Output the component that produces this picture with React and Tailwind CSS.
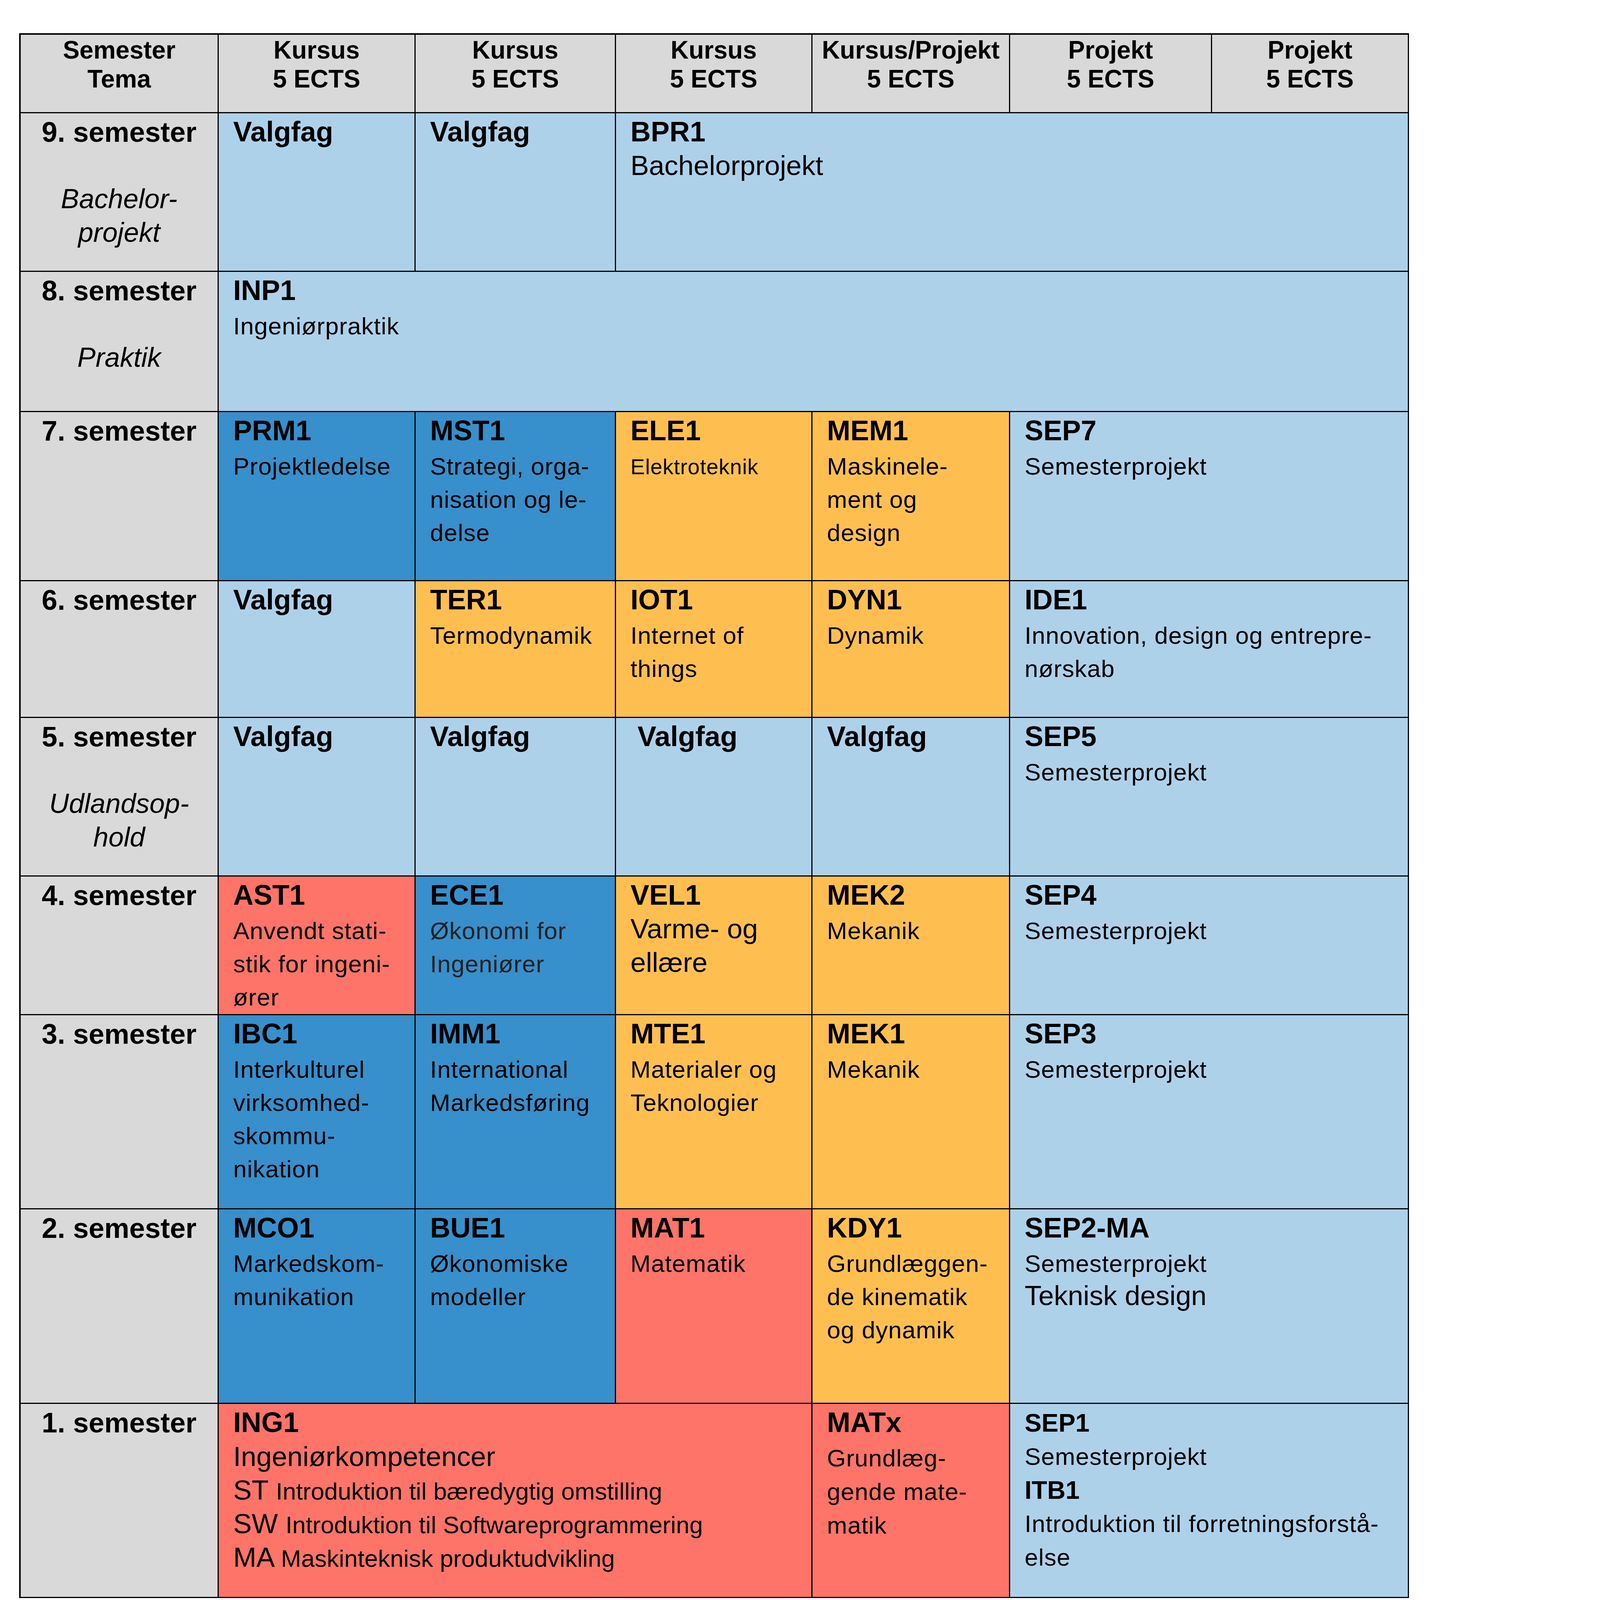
import React from "react";

const LB = "bg-[#AED1EA]";
const DB = "bg-[#378FCB]";
const OR = "bg-[#FFBF50]";
const RD = "bg-[#FF7469]";
const GR = "bg-[#D9D9D9]";

function Cell({ bg, span = "", pad = "pl-[37px] pt-[6px]", className = "", children }) {
  return (
    <div
      className={[
        "border-r-[3px] border-b-[3px] border-black whitespace-nowrap text-black overflow-hidden",
        bg,
        span,
        pad,
        className,
      ].join(" ")}
    >
      {children}
    </div>
  );
}

const Code = ({ children, className = "" }) => (
  <div className={"font-bold text-[72px] leading-[83px] " + className}>{children}</div>
);
const Desc = ({ children, className = "" }) => (
  <div className={"text-[62px] leading-[85px] tracking-[1px] mt-[7px] " + className}>{children}</div>
);
const Big = ({ children, className = "" }) => (
  <div className={"text-[71px] leading-[86px] mt-[2px] " + className}>{children}</div>
);

function Head({ a, b }) {
  return (
    <Cell bg={GR} pad="pt-[2px] text-center">
      <div className="font-bold text-[64px] leading-[74px]">
        {a}
        <br />
        {b}
      </div>
    </Cell>
  );
}

function Sem({ label, theme }) {
  return (
    <Cell bg={GR} pad="pt-[6px] text-center">
      <div className="font-bold text-[72px] leading-[85px]">{label}</div>
      {theme && <div className="italic text-[70px] leading-[86px] mt-[85px]">{theme}</div>}
    </Cell>
  );
}

export default function App() {
  return (
    <div className="min-h-screen bg-white pt-[85px] pl-[49px] font-['Liberation_Sans',Arial,sans-serif]">
      <div className="grid w-max grid-cols-[507px_504px_513px_503px_506px_517px_504px] grid-rows-[201px_406px_359px_433px_350px_406px_355px_497px_498px_497px] border-t-[4px] border-l-[4px] border-black">
        {/* Header */}
        <Head a="Semester" b="Tema" />
        <Head a="Kursus" b="5 ECTS" />
        <Head a="Kursus" b="5 ECTS" />
        <Head a="Kursus" b="5 ECTS" />
        <Head a="Kursus/Projekt" b="5 ECTS" />
        <Head a="Projekt" b="5 ECTS" />
        <Head a="Projekt" b="5 ECTS" />

        {/* 9. semester */}
        <Sem label="9. semester" theme={<>Bachelor-<br />projekt</>} />
        <Cell bg={LB}><Code>Valgfag</Code></Cell>
        <Cell bg={LB}><Code>Valgfag</Code></Cell>
        <Cell bg={LB} span="col-span-4">
          <Code>BPR1</Code>
          <Big>Bachelorprojekt</Big>
        </Cell>

        {/* 8. semester */}
        <Sem label="8. semester" theme="Praktik" />
        <Cell bg={LB} span="col-span-6">
          <Code>INP1</Code>
          <Desc>Ingeniørpraktik</Desc>
        </Cell>

        {/* 7. semester */}
        <Sem label="7. semester" />
        <Cell bg={DB}>
          <Code>PRM1</Code>
          <Desc>Projektledelse</Desc>
        </Cell>
        <Cell bg={DB}>
          <Code>MST1</Code>
          <Desc>Strategi, orga-<br />nisation og le-<br />delse</Desc>
        </Cell>
        <Cell bg={OR}>
          <Code>ELE1</Code>
          <div className="text-[55px] leading-[85px] tracking-[1px] mt-[9px]">Elektroteknik</div>
        </Cell>
        <Cell bg={OR}>
          <Code>MEM1</Code>
          <Desc>Maskinele-<br />ment og<br />design</Desc>
        </Cell>
        <Cell bg={LB} span="col-span-2">
          <Code>SEP7</Code>
          <Desc>Semesterprojekt</Desc>
        </Cell>

        {/* 6. semester */}
        <Sem label="6. semester" />
        <Cell bg={LB}><Code>Valgfag</Code></Cell>
        <Cell bg={OR}>
          <Code>TER1</Code>
          <Desc>Termodynamik</Desc>
        </Cell>
        <Cell bg={OR}>
          <Code>IOT1</Code>
          <Desc>Internet of<br />things</Desc>
        </Cell>
        <Cell bg={OR}>
          <Code>DYN1</Code>
          <Desc>Dynamik</Desc>
        </Cell>
        <Cell bg={LB} span="col-span-2">
          <Code>IDE1</Code>
          <Desc>Innovation, design og entrepre-<br />nørskab</Desc>
        </Cell>

        {/* 5. semester */}
        <Sem label="5. semester" theme={<>Udlandsop-<br />hold</>} />
        <Cell bg={LB}><Code>Valgfag</Code></Cell>
        <Cell bg={LB}><Code>Valgfag</Code></Cell>
        <Cell bg={LB} pad="pl-[55px] pt-[6px]"><Code>Valgfag</Code></Cell>
        <Cell bg={LB}><Code>Valgfag</Code></Cell>
        <Cell bg={LB} span="col-span-2">
          <Code>SEP5</Code>
          <Desc>Semesterprojekt</Desc>
        </Cell>

        {/* 4. semester */}
        <Sem label="4. semester" />
        <Cell bg={RD}>
          <Code>AST1</Code>
          <Desc>Anvendt stati-<br />stik for ingeni-<br />ører</Desc>
        </Cell>
        <Cell bg={DB}>
          <Code>ECE1</Code>
          <Desc className="text-[#222222]">Økonomi for<br />Ingeniører</Desc>
        </Cell>
        <Cell bg={OR}>
          <Code>VEL1</Code>
          <Big>Varme- og<br />ellære</Big>
        </Cell>
        <Cell bg={OR}>
          <Code>MEK2</Code>
          <Desc>Mekanik</Desc>
        </Cell>
        <Cell bg={LB} span="col-span-2">
          <Code>SEP4</Code>
          <Desc>Semesterprojekt</Desc>
        </Cell>

        {/* 3. semester */}
        <Sem label="3. semester" />
        <Cell bg={DB}>
          <Code>IBC1</Code>
          <Desc>Interkulturel<br />virksomhed-<br />skommu-<br />nikation</Desc>
        </Cell>
        <Cell bg={DB}>
          <Code>IMM1</Code>
          <Desc>International<br />Markedsføring</Desc>
        </Cell>
        <Cell bg={OR}>
          <Code>MTE1</Code>
          <Desc>Materialer og<br />Teknologier</Desc>
        </Cell>
        <Cell bg={OR}>
          <Code>MEK1</Code>
          <Desc>Mekanik</Desc>
        </Cell>
        <Cell bg={LB} span="col-span-2">
          <Code>SEP3</Code>
          <Desc>Semesterprojekt</Desc>
        </Cell>

        {/* 2. semester */}
        <Sem label="2. semester" />
        <Cell bg={DB}>
          <Code>MCO1</Code>
          <Desc>Markedskom-<br />munikation</Desc>
        </Cell>
        <Cell bg={DB}>
          <Code>BUE1</Code>
          <Desc>Økonomiske<br />modeller</Desc>
        </Cell>
        <Cell bg={RD}>
          <Code>MAT1</Code>
          <Desc>Matematik</Desc>
        </Cell>
        <Cell bg={OR}>
          <Code>KDY1</Code>
          <Desc>Grundlæggen-<br />de kinematik<br />og dynamik</Desc>
        </Cell>
        <Cell bg={LB} span="col-span-2">
          <Code>SEP2-MA</Code>
          <Desc className="mt-[3px]">Semesterprojekt</Desc>
          <div className="text-[71px] leading-[84px] -mt-[2px]">Teknisk design</div>
        </Cell>

        {/* 1. semester */}
        <Sem label="1. semester" />
        <Cell bg={RD} span="col-span-3">
          <Code>ING1</Code>
          <div className="text-[71px] leading-[86px] mt-[3px]">
            <div>Ingeniørkompetencer</div>
            <div>
              ST <span className="text-[62px] leading-[78px]">Introduktion til bæredygtig omstilling</span>
            </div>
            <div>
              SW <span className="text-[62px] leading-[78px]">Introduktion til Softwareprogrammering</span>
            </div>
            <div>
              MA <span className="text-[62px] leading-[78px]">Maskinteknisk produktudvikling</span>
            </div>
          </div>
        </Cell>
        <Cell bg={RD}>
          <Code>MATx</Code>
          <Desc className="leading-[86px] mt-[5px]">Grundlæg-<br />gende mate-<br />matik</Desc>
        </Cell>
        <Cell bg={LB} span="col-span-2">
          <div className="leading-[86px]">
            <div className="font-bold text-[65px]">SEP1</div>
            <div className="text-[62px] tracking-[1px]">Semesterprojekt</div>
            <div className="font-bold text-[65px]">ITB1</div>
            <div className="text-[62px] tracking-[1px]">
              Introduktion til forretningsforstå-
              <br />
              else
            </div>
          </div>
        </Cell>
      </div>
    </div>
  );
}
